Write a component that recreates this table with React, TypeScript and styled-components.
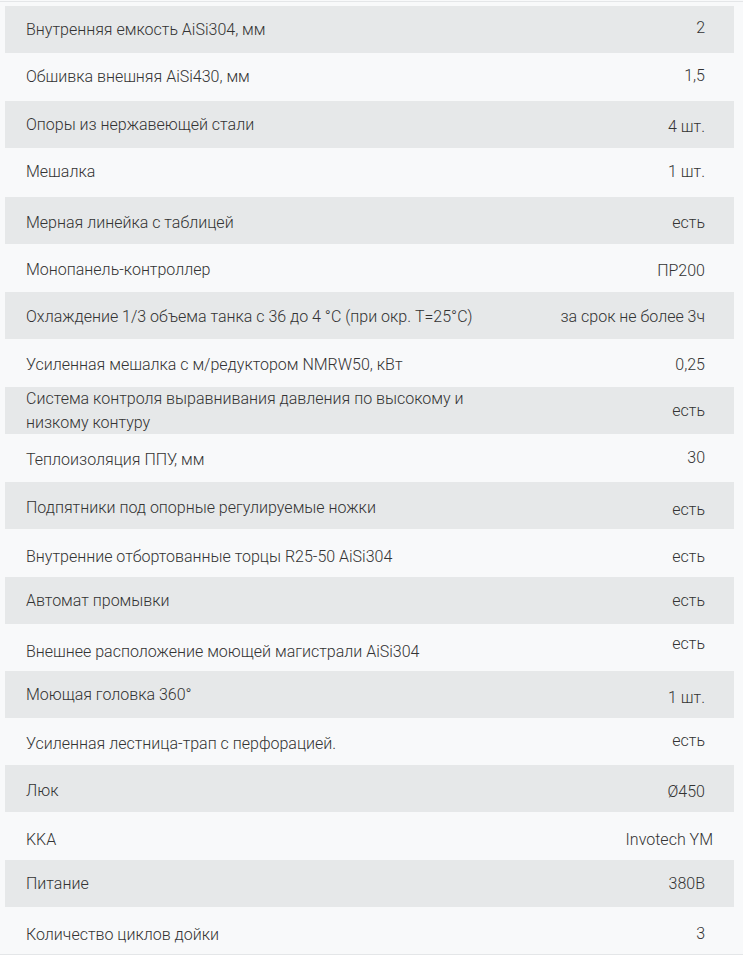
import styled, { createGlobalStyle } from 'styled-components';

interface Spec {
    label: string;
    value: string;
    height: number;
    labelNudge?: number;
    valueNudge?: number;
    valuePad?: number;
}

const specs: Spec[] = [
    { label: 'Внутренняя емкость AiSi304, мм', value: '2', height: 47, valueNudge: -3 },
    { label: 'Обшивка внешняя AiSi430, мм', value: '1,5', height: 48, valueNudge: -3 },
    { label: 'Опоры из нержавеющей стали', value: '4 шт.', height: 47, valueNudge: 4 },
    { label: 'Мешалка', value: '1 шт.', height: 49, labelNudge: -2, valueNudge: -1 },
    { label: 'Мерная линейка с таблицей', value: 'есть', height: 47, labelNudge: 5, valueNudge: 5 },
    { label: 'Монопанель-контроллер', value: 'ПР200', height: 48, labelNudge: 3, valueNudge: 5 },
    { label: 'Охлаждение 1/3 объема танка с 36 до 4 °C (при окр. T=25°C)', value: 'за срок не более 3ч', height: 47, labelNudge: 2, valueNudge: 2 },
    { label: 'Усиленная мешалка с м/редуктором NMRW50, кВт', value: '0,25', height: 48, labelNudge: 3, valueNudge: 3 },
    { label: 'Система контроля выравнивания давления по высокому и низкому контуру', value: 'есть', height: 47, labelNudge: -1, valueNudge: -1 },
    { label: 'Теплоизоляция ППУ, мм', value: '30', height: 48, labelNudge: 4, valueNudge: -1 },
    { label: 'Подпятники под опорные регулируемые ножки', value: 'есть', height: 47, labelNudge: 4, valueNudge: 9 },
    { label: 'Внутренние отбортованные торцы R25-50 AiSi304', value: 'есть', height: 48, labelNudge: 7, valueNudge: 7 },
    { label: 'Автомат промывки', value: 'есть', height: 47 },
    { label: 'Внешнее расположение моющей магистрали AiSi304', value: 'есть', height: 47, labelNudge: 9, valueNudge: -8 },
    { label: 'Моющая головка 360°', value: '1 шт.', height: 47, valueNudge: 7 },
    { label: 'Усиленная лестница-трап с перфорацией.', value: 'есть', height: 47, labelNudge: 5, valueNudge: -2 },
    { label: 'Люк', value: 'Ø450', height: 47, labelNudge: 4, valueNudge: 7 },
    { label: 'KKA', value: 'Invotech YM', height: 48, labelNudge: 7, valueNudge: 7, valuePad: 21 },
    { label: 'Питание', value: '380В', height: 47 },
    { label: 'Количество циклов дойки', value: '3', height: 47, labelNudge: 8, valueNudge: 6 },
];

const GlobalStyle = createGlobalStyle`
    html, body {
        margin: 0;
        padding: 0;
        background-color: #f8f9fa;
    }
    body {
        font-family: Roboto, 'Liberation Sans', sans-serif;
    }
`;

export default function App() {
    return (
        <Page>
            <GlobalStyle />
            <Table>
                {specs.map((spec, i) => (
                    <Row key={spec.label} $striped={i % 2 === 0} $height={spec.height}>
                        <Label $nudge={spec.labelNudge ?? 0}>{spec.label}</Label>
                        <Value $nudge={spec.valueNudge ?? 0} $pad={spec.valuePad ?? 29}>
                            {spec.value}
                        </Value>
                    </Row>
                ))}
            </Table>
        </Page>
    );
}

const nudge = (n: number) =>
    n >= 0 ? `padding-top: ${n}px;` : `padding-bottom: ${-n}px;`;

const Page = styled.div`
    padding-top: 1px;
    width: 743px;
    height: 954px;
    overflow: hidden;
`;
const Table = styled.div`
    border-top: 1px solid #e4e6e8;
    border-bottom: 1px solid #e4e6e8;
    padding: 4px 9px 0 5px;
`;
const Row = styled.div<{ $striped: boolean; $height: number }>`
    display: grid;
    grid-template-columns: 500px 1fr;
    height: ${(p) => p.$height}px;
    background-color: ${(p) => (p.$striped ? '#e6e8e9' : '#f8f9fa')};
    color: #333;
    font-size: 16px;
    font-weight: 300;
    line-height: 24px;
`;
const Label = styled.div<{ $nudge: number }>`
    display: flex;
    align-items: center;
    padding-left: 21px;
    padding-right: 30px;
    ${(p) => nudge(p.$nudge)}
`;
const Value = styled.div<{ $nudge: number; $pad: number }>`
    display: flex;
    align-items: center;
    justify-content: flex-end;
    white-space: nowrap;
    padding-right: ${(p) => p.$pad}px;
    ${(p) => nudge(p.$nudge)}
`;
